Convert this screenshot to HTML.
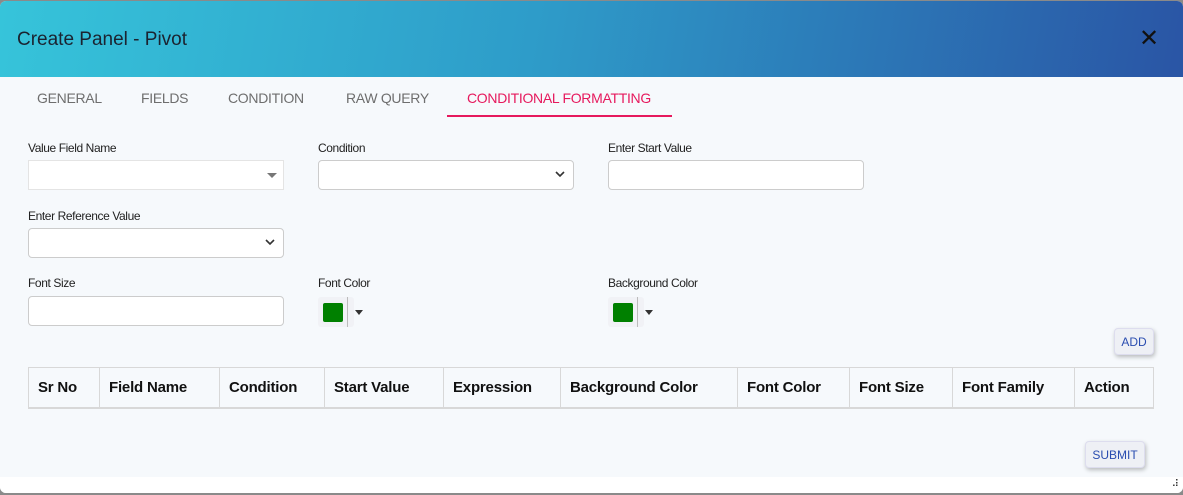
<!DOCTYPE html>
<html><head><style>
*{margin:0;padding:0;box-sizing:border-box}
body{width:1183px;height:495px;background:#8a8a8a;font-family:"Liberation Sans",sans-serif;position:relative;overflow:hidden}
.dlg{position:absolute;left:0;top:1px;width:1183px;height:492px;background:#f6f9fc;border-radius:6px;overflow:hidden}
.hdr{position:absolute;left:0;top:0;width:100%;height:76px;background:linear-gradient(100deg,#36c4da 0%,#2e9cc9 45%,#2a55a5 100%)}
.title{position:absolute;left:17px;top:28px;font-size:19px;color:#1b2330}
.x{position:absolute;left:1139px;top:26px;font-size:24px;color:#111;line-height:24px}
.tab{position:absolute;top:89px;font-size:14px;color:#6e6e6e;letter-spacing:-0.3px}
.ul{position:absolute;left:447px;top:114px;width:225px;height:2px;background:#e6195d}
.lbl{position:absolute;font-size:12px;color:#222;letter-spacing:-0.4px}
.inp{position:absolute;height:30px;background:#fff;border:1px solid #ccc;border-radius:4px}
.arrow{position:absolute;right:8px;top:8px;width:10px;height:10px}
.cp{position:absolute;width:36px;height:30px;background:#f1f2f6;border-radius:3px}
.cp .sw{position:absolute;left:5px;top:6px;width:20px;height:19px;background:#008000;border-radius:2px}
.cp .ln{position:absolute;left:29px;top:0;width:1px;height:30px;background:#bbb}
.cp .tr{position:absolute;left:37px;top:13px;border-left:4px solid transparent;border-right:4px solid transparent;border-top:5px solid #333}
table{position:absolute;left:28px;top:366px;border-collapse:collapse;width:1126px}
td{border:1px solid #d8d8d8;border-bottom:2px solid #d8d8d8;height:40px;font-weight:bold;font-size:15px;padding-left:9px;color:#111;letter-spacing:-0.2px}
.btn{position:absolute;height:27px;background:#eef0f5;border:1px solid #dde;border-radius:4px;box-shadow:1px 2px 4px rgba(0,0,0,.25);color:#2a4db0;font-size:12px;text-align:center;line-height:26px}
.foot{position:absolute;left:0;top:476px;width:100%;height:16px;background:#fff}
</style></head><body>
<div class="dlg">
<div class="hdr"><div class="title">Create Panel - Pivot</div><div class="x">✕</div></div>
<div class="tab" style="left:37px">GENERAL</div>
<div class="tab" style="left:141px">FIELDS</div>
<div class="tab" style="left:228px">CONDITION</div>
<div class="tab" style="left:346px">RAW QUERY</div>
<div class="tab" style="left:467px;color:#e6195d">CONDITIONAL FORMATTING</div>
<div class="ul"></div>

<div class="lbl" style="left:28px;top:140px">Value Field Name</div>
<div class="lbl" style="left:318px;top:140px">Condition</div>
<div class="lbl" style="left:608px;top:140px">Enter Start Value</div>
<div class="inp" style="left:28px;top:159px;width:256px;border-color:#e4e4e4;border-radius:0"><div style="position:absolute;right:6px;top:12px;border-left:5px solid transparent;border-right:5px solid transparent;border-top:5px solid #777"></div></div>
<div class="inp" style="left:318px;top:159px;width:256px"><svg class="arrow" viewBox="0 0 10 10"><path d="M1 3l4 4 4-4" stroke="#333" stroke-width="1.6" fill="none"/></svg></div>
<div class="inp" style="left:608px;top:159px;width:256px"></div>

<div class="lbl" style="left:28px;top:208px">Enter Reference Value</div>
<div class="inp" style="left:28px;top:227px;width:256px"><svg class="arrow" viewBox="0 0 10 10"><path d="M1 3l4 4 4-4" stroke="#333" stroke-width="1.6" fill="none"/></svg></div>

<div class="lbl" style="left:28px;top:275px">Font Size</div>
<div class="lbl" style="left:318px;top:275px">Font Color</div>
<div class="lbl" style="left:608px;top:275px">Background Color</div>
<div class="inp" style="left:28px;top:295px;width:256px"></div>
<div class="cp" style="left:318px;top:296px"><div class="sw"></div><div class="ln"></div><div class="tr"></div></div>
<div class="cp" style="left:608px;top:296px"><div class="sw"></div><div class="ln"></div><div class="tr"></div></div>

<div class="btn" style="left:1114px;top:327px;width:40px">ADD</div>

<table><tr>
<td style="width:71px">Sr No</td><td style="width:120px">Field Name</td><td style="width:105px">Condition</td><td style="width:119px">Start Value</td><td style="width:117px">Expression</td><td style="width:177px">Background Color</td><td style="width:112px">Font Color</td><td style="width:103px">Font Size</td><td style="width:122px">Font Family</td><td>Action</td>
</tr></table>

<div class="btn" style="left:1085px;top:440px;width:60px">SUBMIT</div>
<div class="foot"><div style="position:absolute;right:4px;top:2px;font-size:10px;color:#333">⠼</div></div>
</div>
</body></html>
